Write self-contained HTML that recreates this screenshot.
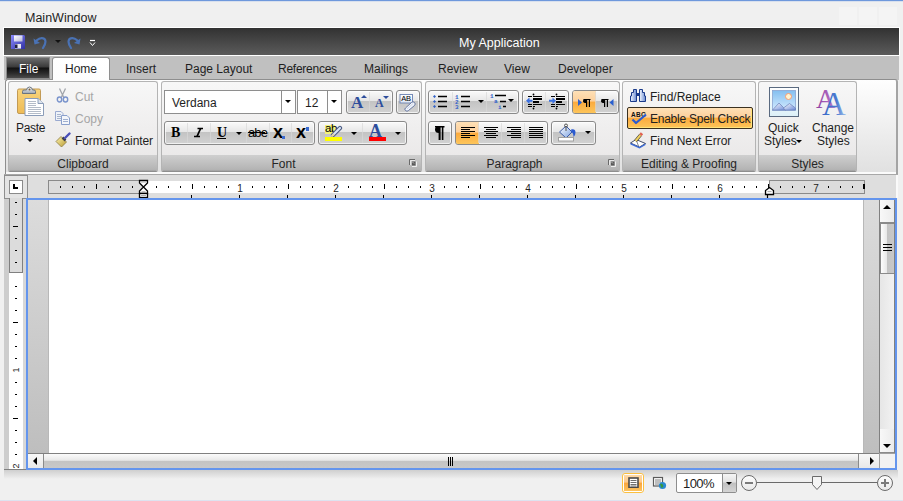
<!DOCTYPE html>
<html><head><meta charset="utf-8">
<style>
*{box-sizing:border-box;margin:0;padding:0}
html,body{width:903px;height:501px;overflow:hidden;background:#f0f0f0;font-family:"Liberation Sans",sans-serif;font-size:12px;color:#1e1e1e;position:relative}
.a{position:absolute}
.t{position:absolute;white-space:nowrap;line-height:14px}
/* top */
#topline{left:0;top:0;width:903px;height:2px;background:linear-gradient(#6e98dc 50%,#d8e0ee 50%)}
.capbtn{position:absolute;top:7px;height:18px;width:18px;background:#f4f4f4}
#qat{left:3px;top:27px;width:897px;height:29px;border:1px solid #fff;background:linear-gradient(#323232,#5b5b5b)}
#tabstrip{left:4px;top:56px;width:895px;height:24px;background:#c0c0c0}
#ribbon{left:5px;top:79px;width:893px;height:96px;border:1px solid #8e8e8e;border-right:2px solid #a4a4a4;border-radius:3px 3px 0 0;background:linear-gradient(#fefefe,#e0e0e0)}
.grp{position:absolute;top:81px;height:91px;border:1px solid #b4b4b4;border-bottom-color:#8e8e8e;border-radius:3px 3px 2px 2px;background:linear-gradient(#f7f7f7,#e8e6e6);overflow:hidden}
.grp .lbl{position:absolute;left:0;right:0;bottom:0;height:16px;background:linear-gradient(#cfcfcf,#b4b4b4 90%,#a0a0a0);text-align:center;line-height:19px;color:#262626}
.btng{position:absolute;border:1px solid #8a8a8a;border-radius:3px;background:linear-gradient(#fafafa 0%,#e6e6e6 45%,#c3c3c3 46%,#d2d2d2 100%);box-shadow:inset 0 0 0 1px rgba(255,255,255,.7)}
.sep{position:absolute;top:1px;bottom:1px;width:1px;background:rgba(160,160,160,.45);border-right:1px solid rgba(255,255,255,.4)}
.combo{position:absolute;border:1px solid #8e8e8e;background:#fff}
.dd{position:absolute;width:0;height:0;border-left:3px solid transparent;border-right:3px solid transparent;border-top:3px solid #000}
.orange{background:linear-gradient(#fee0b6 0%,#fdd09c 46%,#fbaa3e 50%,#fdc55a 100%)!important;border-color:#c29a48!important}
.rnum{position:absolute;top:182px;width:8px;text-align:center;font-size:10px;line-height:14px;color:#222}
.vnum{position:absolute;left:12px;width:8px;text-align:center;font-size:9px;line-height:12px;color:#222;transform:rotate(-90deg)}
</style></head><body>
<div class="a" id="topline"></div>
<div class="t" style="left:25px;top:11px;color:#1e1e1e;font-size:12.5px">MainWindow</div>
<div class="capbtn" style="left:839px"></div>
<div class="capbtn" style="left:859px"></div>
<div class="capbtn" style="left:879px"></div>

<div class="a" id="qat"></div>

<svg class="a" style="left:10px;top:34px" width="16" height="16" viewBox="0 0 16 16">
 <defs><linearGradient id="flp" x1="0" y1="0" x2="1" y2="1"><stop offset="0" stop-color="#8a8aff"/><stop offset="1" stop-color="#3030a0"/></linearGradient>
 <linearGradient id="lbl2" x1="0" y1="0" x2="1" y2="1"><stop offset="0" stop-color="#fff"/><stop offset="1" stop-color="#b8b8d8"/></linearGradient></defs>
 <path d="M1 1 H14 L15 2 V15 H1 Z" fill="url(#flp)"/>
 <rect x="4" y="1.5" width="8.5" height="6" fill="url(#lbl2)"/>
 <rect x="5" y="10" width="6" height="4.5" fill="#e8e8f0"/><rect x="5" y="10.5" width="2.5" height="3.5" fill="#202040"/>
</svg>
<svg class="a" style="left:33px;top:35px" width="14" height="14" viewBox="0 0 14 14">
 <path d="M3.5 5.5 Q8 1.5 11.5 4 Q14 7 10 13" stroke="#4a72b4" stroke-width="2.2" fill="none" stroke-linecap="round"/>
 <path d="M0.5 3.5 L1.5 9.5 L7 8 Z" fill="#4a72b4"/>
</svg>
<div class="a" style="left:55px;top:40px;width:0;height:0;border-left:3px solid transparent;border-right:3px solid transparent;border-top:3px solid #111"></div>
<svg class="a" style="left:67px;top:35px" width="14" height="14" viewBox="0 0 14 14">
 <path d="M10.5 5.5 Q6 1.5 2.5 4 Q0 7 4 13" stroke="#4a72b4" stroke-width="2.2" fill="none" stroke-linecap="round"/>
 <path d="M13.5 3.5 L12.5 9.5 L7 8 Z" fill="#4a72b4"/>
</svg>
<svg class="a" style="left:89px;top:39px" width="7" height="8" viewBox="0 0 7 8"><path d="M1 1.5 H6" stroke="#fff" stroke-width="1.2"/><path d="M1 3.5 L3.5 6.5 L6 3.5" stroke="#fff" stroke-width="1" fill="none"/></svg>
<div class="t" style="left:459px;top:36px;color:#fff;font-size:12.5px">My Application</div>

<div class="a" id="tabstrip"></div>
<!-- File button -->
<div class="a" style="left:6px;top:57px;width:44px;height:22px;border:1px solid #8a8a8a;background:linear-gradient(#6c6c6c,#3a3a3a 45%,#111 50%,#2a2a2a 75%,#4a4a4a)"></div>
<div class="t" style="left:19px;top:62px;color:#fff">File</div>
<!-- Home tab -->
<div class="a" style="left:52px;top:57px;width:58px;height:24px;border:1px solid #8e8e8e;border-bottom:none;border-radius:3px 3px 0 0;background:linear-gradient(#fff,#fdfdfd)"></div>
<div class="t" style="left:65px;top:62px">Home</div>
<div class="t" style="left:126px;top:62px">Insert</div>
<div class="t" style="left:185px;top:62px">Page Layout</div>
<div class="t" style="left:278px;top:62px;letter-spacing:-0.25px">References</div>
<div class="t" style="left:364px;top:62px">Mailings</div>
<div class="t" style="left:438px;top:62px">Review</div>
<div class="t" style="left:504px;top:62px">View</div>
<div class="t" style="left:558px;top:62px">Developer</div>

<div class="a" id="ribbon"></div>
<div class="a" style="left:53px;top:79px;width:56px;height:2px;background:#fdfdfd"></div>

<div class="a" style="left:6px;top:172px;width:890px;height:2px;background:#fbfbfb"></div>
<!-- Clipboard group -->
<div class="grp" style="left:8px;width:150px"><div class="lbl">Clipboard</div></div>
<!-- Font group -->
<div class="grp" style="left:161px;width:261px"><div class="lbl" style="padding-right:16px">Font</div></div>
<!-- Paragraph group -->
<div class="grp" style="left:425px;width:195px"><div class="lbl" style="padding-right:16px">Paragraph</div></div>
<!-- Editing group -->
<div class="grp" style="left:622px;width:134px"><div class="lbl">Editing &amp; Proofing</div></div>
<!-- Styles group -->
<div class="grp" style="left:758px;width:99px"><div class="lbl">Styles</div></div>


<!-- ===== RULER ===== -->
<div class="a" style="left:4px;top:174px;width:894px;height:1px;background:#a8a8a8"></div>
<div class="a" style="left:28px;top:175px;width:868px;height:23px;background:#dedede"></div><div class="a" style="left:896px;top:175px;width:2px;height:23px;background:#fafafa"></div>
<!-- corner -->
<div class="a" style="left:4px;top:175px;width:24px;height:24px;border:1px solid #8e8e8e;background:#e4e4e4"></div>
<div class="a" style="left:9px;top:180px;width:14px;height:14px;border:1px solid #8a8a8a;background:#fff"></div>
<div class="a" style="left:13px;top:184px;width:2px;height:5px;background:#000"></div>
<div class="a" style="left:13px;top:187px;width:5px;height:2px;background:#000"></div>
<!-- horizontal ruler -->
<div class="a" style="left:48px;top:181px;width:816px;height:12px;background:#fff"></div>
<div class="a" style="left:48px;top:180px;width:96px;height:14px;border:1px solid #8a8a8a;border-right:none;background:#dcdcdc"></div>
<div class="a" style="left:769px;top:180px;width:96px;height:14px;border:1px solid #8a8a8a;background:#dcdcdc"></div>
<div class="a" style="left:60px;top:186px;width:1px;height:2px;background:#000"></div>
<div class="a" style="left:72px;top:186px;width:1px;height:2px;background:#000"></div>
<div class="a" style="left:84px;top:186px;width:1px;height:2px;background:#000"></div>
<div class="a" style="left:96px;top:184px;width:1px;height:5px;background:#000"></div>
<div class="a" style="left:108px;top:186px;width:1px;height:2px;background:#000"></div>
<div class="a" style="left:120px;top:186px;width:1px;height:2px;background:#000"></div>
<div class="a" style="left:132px;top:186px;width:1px;height:2px;background:#000"></div>
<div class="a" style="left:156px;top:186px;width:1px;height:2px;background:#000"></div>
<div class="a" style="left:168px;top:186px;width:1px;height:2px;background:#000"></div>
<div class="a" style="left:180px;top:186px;width:1px;height:2px;background:#000"></div>
<div class="a" style="left:192px;top:184px;width:1px;height:5px;background:#000"></div>
<div class="a" style="left:204px;top:186px;width:1px;height:2px;background:#000"></div>
<div class="a" style="left:216px;top:186px;width:1px;height:2px;background:#000"></div>
<div class="a" style="left:228px;top:186px;width:1px;height:2px;background:#000"></div>
<div class="rnum" style="left:236px">1</div>
<div class="a" style="left:252px;top:186px;width:1px;height:2px;background:#000"></div>
<div class="a" style="left:264px;top:186px;width:1px;height:2px;background:#000"></div>
<div class="a" style="left:276px;top:186px;width:1px;height:2px;background:#000"></div>
<div class="a" style="left:288px;top:184px;width:1px;height:5px;background:#000"></div>
<div class="a" style="left:300px;top:186px;width:1px;height:2px;background:#000"></div>
<div class="a" style="left:312px;top:186px;width:1px;height:2px;background:#000"></div>
<div class="a" style="left:324px;top:186px;width:1px;height:2px;background:#000"></div>
<div class="rnum" style="left:332px">2</div>
<div class="a" style="left:348px;top:186px;width:1px;height:2px;background:#000"></div>
<div class="a" style="left:360px;top:186px;width:1px;height:2px;background:#000"></div>
<div class="a" style="left:372px;top:186px;width:1px;height:2px;background:#000"></div>
<div class="a" style="left:384px;top:184px;width:1px;height:5px;background:#000"></div>
<div class="a" style="left:396px;top:186px;width:1px;height:2px;background:#000"></div>
<div class="a" style="left:408px;top:186px;width:1px;height:2px;background:#000"></div>
<div class="a" style="left:420px;top:186px;width:1px;height:2px;background:#000"></div>
<div class="rnum" style="left:428px">3</div>
<div class="a" style="left:444px;top:186px;width:1px;height:2px;background:#000"></div>
<div class="a" style="left:456px;top:186px;width:1px;height:2px;background:#000"></div>
<div class="a" style="left:468px;top:186px;width:1px;height:2px;background:#000"></div>
<div class="a" style="left:480px;top:184px;width:1px;height:5px;background:#000"></div>
<div class="a" style="left:492px;top:186px;width:1px;height:2px;background:#000"></div>
<div class="a" style="left:504px;top:186px;width:1px;height:2px;background:#000"></div>
<div class="a" style="left:516px;top:186px;width:1px;height:2px;background:#000"></div>
<div class="rnum" style="left:524px">4</div>
<div class="a" style="left:540px;top:186px;width:1px;height:2px;background:#000"></div>
<div class="a" style="left:552px;top:186px;width:1px;height:2px;background:#000"></div>
<div class="a" style="left:564px;top:186px;width:1px;height:2px;background:#000"></div>
<div class="a" style="left:576px;top:184px;width:1px;height:5px;background:#000"></div>
<div class="a" style="left:588px;top:186px;width:1px;height:2px;background:#000"></div>
<div class="a" style="left:600px;top:186px;width:1px;height:2px;background:#000"></div>
<div class="a" style="left:612px;top:186px;width:1px;height:2px;background:#000"></div>
<div class="rnum" style="left:620px">5</div>
<div class="a" style="left:636px;top:186px;width:1px;height:2px;background:#000"></div>
<div class="a" style="left:648px;top:186px;width:1px;height:2px;background:#000"></div>
<div class="a" style="left:660px;top:186px;width:1px;height:2px;background:#000"></div>
<div class="a" style="left:672px;top:184px;width:1px;height:5px;background:#000"></div>
<div class="a" style="left:684px;top:186px;width:1px;height:2px;background:#000"></div>
<div class="a" style="left:696px;top:186px;width:1px;height:2px;background:#000"></div>
<div class="a" style="left:708px;top:186px;width:1px;height:2px;background:#000"></div>
<div class="rnum" style="left:716px">6</div>
<div class="a" style="left:732px;top:186px;width:1px;height:2px;background:#000"></div>
<div class="a" style="left:744px;top:186px;width:1px;height:2px;background:#000"></div>
<div class="a" style="left:756px;top:186px;width:1px;height:2px;background:#000"></div>
<div class="a" style="left:780px;top:186px;width:1px;height:2px;background:#000"></div>
<div class="a" style="left:792px;top:186px;width:1px;height:2px;background:#000"></div>
<div class="a" style="left:804px;top:186px;width:1px;height:2px;background:#000"></div>
<div class="rnum" style="left:812px">7</div>
<div class="a" style="left:828px;top:186px;width:1px;height:2px;background:#000"></div>
<div class="a" style="left:840px;top:186px;width:1px;height:2px;background:#000"></div>
<div class="a" style="left:852px;top:186px;width:1px;height:2px;background:#000"></div>
<div class="a" style="left:191px;top:195px;width:1px;height:3px;background:#000"></div>
<div class="a" style="left:239px;top:195px;width:1px;height:3px;background:#000"></div>
<div class="a" style="left:287px;top:195px;width:1px;height:3px;background:#000"></div>
<div class="a" style="left:335px;top:195px;width:1px;height:3px;background:#000"></div>
<div class="a" style="left:383px;top:195px;width:1px;height:3px;background:#000"></div>
<div class="a" style="left:431px;top:195px;width:1px;height:3px;background:#000"></div>
<div class="a" style="left:479px;top:195px;width:1px;height:3px;background:#000"></div>
<div class="a" style="left:527px;top:195px;width:1px;height:3px;background:#000"></div>
<div class="a" style="left:575px;top:195px;width:1px;height:3px;background:#000"></div>
<div class="a" style="left:623px;top:195px;width:1px;height:3px;background:#000"></div>
<div class="a" style="left:671px;top:195px;width:1px;height:3px;background:#000"></div>
<div class="a" style="left:719px;top:195px;width:1px;height:3px;background:#000"></div>
<svg class="a" style="left:138px;top:179px" width="12" height="20" viewBox="0 0 12 20"><path d="M1.5 1.5 H9.5 V4 L5.5 8 L9.5 12 V14.5 H1.5 V12 L5.5 8 L1.5 4 Z" fill="#fff" stroke="#000" stroke-width="1.3"/><path d="M3 3H8M3.5 12.8H7.5" stroke="#b0b0b0" stroke-width="1.2"/><rect x="1.5" y="14.5" width="8" height="4" fill="#fff" stroke="#000" stroke-width="1.3"/><path d="M3 16.5H8" stroke="#b0b0b0"/></svg>
<div class="a" style="left:768px;top:184px;width:1px;height:4px;background:#000"></div>
<svg class="a" style="left:764px;top:186px" width="12" height="13" viewBox="0 0 12 13"><path d="M1.5 8.5 V4.5 L5.5 1.5 L9.5 4.5 V8.5 Z" fill="#fff" stroke="#000" stroke-width="1.3"/><path d="M3.5 5.5H7.5" stroke="#b0b0b0" stroke-width="1.2"/><path d="M3.5 8.5 V12" stroke="#000" stroke-width="1.2"/></svg>
<div class="a" style="left:863px;top:184px;width:2px;height:5px;background:#000"></div>

<!-- ===== DOCUMENT FRAME ===== -->
<div class="a" style="left:4px;top:199px;width:5px;height:270px;background:#cdcdcd"></div>
<div class="a" style="left:9px;top:199px;width:14px;height:270px;background:#fff"></div>
<div class="a" style="left:9px;top:198px;width:14px;height:75px;border:1px solid #808080;border-top:none;background:#dcdcdc"></div>
<div class="a" style="left:23px;top:199px;width:3px;height:270px;background:#d8d8d8"></div>
<div class="a" style="left:4px;top:469px;width:23px;height:1px;background:#808080"></div>
<div class="a" style="left:0;top:0;width:30px;height:469px;overflow:hidden"><div class="a" style="left:15px;top:202px;width:2px;height:1px;background:#000"></div>
<div class="a" style="left:15px;top:214px;width:2px;height:1px;background:#000"></div>
<div class="a" style="left:13px;top:226px;width:5px;height:1px;background:#000"></div>
<div class="a" style="left:15px;top:238px;width:2px;height:1px;background:#000"></div>
<div class="a" style="left:15px;top:250px;width:2px;height:1px;background:#000"></div>
<div class="a" style="left:15px;top:262px;width:2px;height:1px;background:#000"></div>
<div class="a" style="left:15px;top:286px;width:2px;height:1px;background:#000"></div>
<div class="a" style="left:15px;top:298px;width:2px;height:1px;background:#000"></div>
<div class="a" style="left:15px;top:310px;width:2px;height:1px;background:#000"></div>
<div class="a" style="left:13px;top:322px;width:5px;height:1px;background:#000"></div>
<div class="a" style="left:15px;top:334px;width:2px;height:1px;background:#000"></div>
<div class="a" style="left:15px;top:346px;width:2px;height:1px;background:#000"></div>
<div class="a" style="left:15px;top:358px;width:2px;height:1px;background:#000"></div>
<div class="vnum" style="top:364px">1</div>
<div class="a" style="left:15px;top:382px;width:2px;height:1px;background:#000"></div>
<div class="a" style="left:15px;top:394px;width:2px;height:1px;background:#000"></div>
<div class="a" style="left:15px;top:406px;width:2px;height:1px;background:#000"></div>
<div class="a" style="left:13px;top:418px;width:5px;height:1px;background:#000"></div>
<div class="a" style="left:15px;top:430px;width:2px;height:1px;background:#000"></div>
<div class="a" style="left:15px;top:442px;width:2px;height:1px;background:#000"></div>
<div class="a" style="left:15px;top:454px;width:2px;height:1px;background:#000"></div>
<div class="vnum" style="top:460px">2</div></div>

<div class="a" style="left:26px;top:198px;width:871px;height:272px;border:2px solid #6495ed;background:#fff"></div>
<div class="a" style="left:28px;top:200px;width:21px;height:253px;background:linear-gradient(#dcdcdc,#bebebe);border-right:1px solid #b8b8b8"></div>
<div class="a" style="left:863px;top:200px;width:16px;height:253px;background:linear-gradient(#dcdcdc,#bebebe);border-left:1px solid #b8b8b8"></div>
<!-- v scrollbar -->
<div class="a" style="left:879px;top:200px;width:16px;height:253px;background:linear-gradient(90deg,#e6e6e6,#f2f2f2);border-left:1px solid #808080;border-right:1px solid #808080"></div>
<div class="a" style="left:880px;top:200px;width:14px;height:23px;background:linear-gradient(90deg,#f8f8f8,#ececec);border-bottom:1px solid #8a8a8a"></div>
<div class="a" style="left:883px;top:205px;width:0;height:0;border-left:4px solid transparent;border-right:4px solid transparent;border-bottom:4px solid #000"></div>
<div class="a" style="left:880px;top:223px;width:14px;height:51px;border:1px solid #8a8a8a;border-right:none;background:linear-gradient(90deg,#fdfdfd,#e8e8e8 45%,#c4c4c4 50%,#c8c8c8)"></div>
<div class="a" style="left:883px;top:244px;width:9px;height:1px;background:#000"></div>
<div class="a" style="left:883px;top:247px;width:9px;height:1px;background:#000"></div>
<div class="a" style="left:883px;top:250px;width:9px;height:1px;background:#000"></div>
<div class="a" style="left:880px;top:429px;width:14px;height:24px;background:linear-gradient(90deg,#f8f8f8,#ececec);border-bottom:1px solid #8a8a8a"></div>
<div class="a" style="left:883px;top:444px;width:0;height:0;border-left:4px solid transparent;border-right:4px solid transparent;border-top:4px solid #000"></div>
<!-- h scrollbar -->
<div class="a" style="left:28px;top:453px;width:851px;height:15px;background:#f0f0f0;border-top:1px solid #808080"></div>
<div class="a" style="left:28px;top:454px;width:16px;height:14px;background:linear-gradient(#f8f8f8,#e8e8e8);border-right:1px solid #8a8a8a"></div>
<div class="a" style="left:33px;top:457px;width:0;height:0;border-top:4px solid transparent;border-bottom:4px solid transparent;border-right:4px solid #000"></div>
<div class="a" style="left:44px;top:454px;width:815px;height:14px;background:linear-gradient(#fbfbfb,#e8e8e8 45%,#c4c4c4 52%,#c8c8c8)"></div>
<div class="a" style="left:448px;top:457px;width:1px;height:9px;background:#000"></div>
<div class="a" style="left:450px;top:457px;width:1px;height:9px;background:#000"></div>
<div class="a" style="left:452px;top:457px;width:1px;height:9px;background:#000"></div>
<div class="a" style="left:858px;top:454px;width:21px;height:14px;background:linear-gradient(#f8f8f8,#e8e8e8);border-left:1px solid #8a8a8a"></div>
<div class="a" style="left:870px;top:457px;width:0;height:0;border-top:4px solid transparent;border-bottom:4px solid transparent;border-left:4px solid #000"></div>
<div class="a" style="left:879px;top:453px;width:16px;height:15px;background:#f2f2f2;border-left:1px solid #a0a0a0;border-top:1px solid #a0a0a0"></div>

<!-- ===== STATUS BAR ===== -->
<div class="a" style="left:4px;top:470px;width:894px;height:9px;background:linear-gradient(#cfcfcf,#f0f0f0)"></div>
<div class="a" style="left:0;top:500px;width:903px;height:1px;background:#dde3f0"></div>
<div class="a" style="left:622px;top:473px;width:22px;height:20px;border:1px solid #fcc040;border-radius:3px;background:#fff;padding:1px"><div style="width:18px;height:16px;background:linear-gradient(#fed9a6,#fdc98a 45%,#fba53c 50%,#fcc35e)"></div></div>
<svg class="a" style="left:628px;top:477px" width="11" height="11" viewBox="0 0 11 11"><rect x="1" y="1" width="9" height="9.5" fill="#fff" stroke="#4a4a4a" stroke-width="1.6"/><path d="M2.5 3.5H8.5M2.5 5.5H8.5M2.5 7.5H8.5M2.5 9H8.5" stroke="#606060" stroke-width="0.9"/></svg>
<svg class="a" style="left:652px;top:476px" width="15" height="14" viewBox="0 0 15 14"><rect x="1.5" y="1.5" width="9" height="8.5" fill="#fff" stroke="#5a5a5a" stroke-width="1.2"/><path d="M3 4H9M3 6H9M3 8H7" stroke="#707070" stroke-width="0.9"/><circle cx="10.5" cy="9.5" r="3.6" fill="#2a8ad0"/><path d="M8 8 Q10 7 11 9 Q12 11 9.5 12" fill="#3a9a3a"/></svg>
<div class="combo" style="left:676px;top:473px;width:61px;height:20px;border-radius:2px"></div>
<div class="t" style="left:683px;top:477px;font-size:13px;letter-spacing:-0.6px">100%</div>
<div class="a" style="left:722px;top:474px;width:14px;height:18px;border-left:1px solid #8e8e8e;background:linear-gradient(#f6f6f6,#e2e2e2 45%,#c0c0c0 50%,#d4d4d4)"></div>
<div class="dd" style="left:726px;top:482px"></div>
<div class="a" style="left:741px;top:475px;width:16px;height:16px;border:1px solid #6a6a6a;border-radius:50%;background:linear-gradient(#fdfdfd,#e8e8e8)"></div>
<div class="a" style="left:745px;top:482px;width:8px;height:2px;background:#7a7a7a"></div>
<div class="a" style="left:757px;top:482px;width:120px;height:1px;background:#6a6a6a"></div>
<div class="a" style="left:877px;top:475px;width:16px;height:16px;border:1px solid #6a6a6a;border-radius:50%;background:linear-gradient(#fdfdfd,#e8e8e8)"></div>
<div class="a" style="left:881px;top:482px;width:8px;height:2px;background:#7a7a7a"></div>
<div class="a" style="left:884px;top:479px;width:2px;height:8px;background:#7a7a7a"></div>
<svg class="a" style="left:811px;top:475px" width="12" height="16" viewBox="0 0 12 16"><path d="M1.5 1.5 H10.5 V9.5 L6 14.5 L1.5 9.5 Z" fill="#f4f4f4" stroke="#6a6a6a"/></svg>

<!-- ===== CLIPBOARD CONTENT ===== -->
<svg class="a" style="left:14px;top:84px" width="32" height="34" viewBox="0 0 32 34">
 <defs><linearGradient id="brd" x1="0" y1="0" x2="0" y2="1"><stop offset="0" stop-color="#f8d47c"/><stop offset="1" stop-color="#eebb55"/></linearGradient>
 <linearGradient id="clp" x1="0" y1="0" x2="0" y2="1"><stop offset="0" stop-color="#fff"/><stop offset="1" stop-color="#9aa4b0"/></linearGradient></defs>
 <rect x="3.5" y="5" width="23" height="24.5" rx="1.5" fill="url(#brd)" stroke="#c29a55"/>
 <path d="M8.5 9.5 L8.5 7.5 Q8.5 6 10 6 L12.5 6 Q13 3 15.5 3 Q18 3 18.5 6 L20 6 Q21.5 6 21.5 7.5 L21.5 9.5 Z" fill="url(#clp)" stroke="#6a7480"/>
 <circle cx="15.5" cy="5.5" r="1" fill="#7a6040"/>
 <path d="M11 14.5 H24 L29.5 19.5 V31.5 H11 Z" fill="#fff" stroke="#8a9cb8"/>
 <path d="M24 14.5 V19.5 H29.5" fill="#dde4ee" stroke="#8a9cb8"/>
 <g stroke="#b4bcc8" stroke-width="1"><path d="M14 17.5H22M14 19.5H22M14 21.5H22M14 23.5H27M14 25.5H27M14 27.5H27M14 29.5H27"/></g>
</svg>
<div class="t" style="left:16px;top:121px;letter-spacing:-0.3px">Paste</div>
<div class="dd" style="left:27px;top:139px;border-left-width:3px;border-right-width:3px;border-top-width:3px"></div>

<svg class="a" style="left:56px;top:88px" width="14" height="16" viewBox="0 0 14 16">
 <path d="M3.5 0.5 L8 10 M9.5 0.5 L5 10" stroke="#a0a4aa" stroke-width="1.3" fill="none"/>
 <ellipse cx="3.5" cy="11.5" rx="2.2" ry="2.5" fill="none" stroke="#7a94cc" stroke-width="1.4"/>
 <ellipse cx="9.5" cy="11.5" rx="2.2" ry="2.5" fill="none" stroke="#7a94cc" stroke-width="1.4"/>
</svg>
<div class="t" style="left:75px;top:90px;color:#a6a6a6">Cut</div>
<svg class="a" style="left:55px;top:110px" width="16" height="15" viewBox="0 0 16 15">
 <path d="M0.5 1.5 H6 L8 3.5 V10.5 H0.5 Z" fill="#eef2f8" stroke="#9aaad0"/>
 <path d="M2 4.5H6M2 6.5H6M2 8.5H6" stroke="#a8b4cc"/>
 <path d="M6.5 5.5 H12 L14.5 8 V14.5 H6.5 Z" fill="#f4f6fa" stroke="#8aa0cc"/>
 <path d="M8 9.5H13M8 11.5H13" stroke="#a0b0d0"/>
</svg>
<div class="t" style="left:75px;top:112px;color:#a6a6a6">Copy</div>
<svg class="a" style="left:55px;top:132px" width="17" height="16" viewBox="0 0 17 16">
 <defs><linearGradient id="brs" x1="0" y1="0" x2="1" y2="1"><stop offset="0" stop-color="#fff4b0"/><stop offset="1" stop-color="#b89a30"/></linearGradient></defs>
 <path d="M1 9.5 L6 4.5 L11.5 10 L6.5 15 Z" fill="url(#brs)" stroke="#8a7a40" stroke-width="0.8"/>
 <path d="M7.5 5.5 L10.5 8.5" stroke="#404048" stroke-width="2.5"/>
 <path d="M10 6 L14.5 1.5" stroke="#4a50b8" stroke-width="2.4" stroke-linecap="round"/>
</svg>
<div class="t" style="left:75px;top:134px;letter-spacing:-0.1px">Format Painter</div>

<!-- ===== FONT CONTENT ===== -->
<div class="combo" style="left:164px;top:90px;width:132px;height:24px"></div>
<div class="a" style="left:281px;top:91px;width:1px;height:22px;background:#8e8e8e"></div>
<div class="dd" style="left:285px;top:100px"></div>
<div class="t" style="left:172px;top:96px">Verdana</div>
<div class="combo" style="left:297px;top:90px;width:45px;height:24px"></div>
<div class="a" style="left:327px;top:91px;width:1px;height:22px;background:#8e8e8e"></div>
<div class="dd" style="left:331px;top:100px"></div>
<div class="t" style="left:305px;top:96px">12</div>

<div class="btng" style="left:346px;top:90px;width:47px;height:24px"><div class="sep" style="left:22px"></div></div>
<div class="t" style="left:351px;top:96px;font-family:'Liberation Serif';font-weight:bold;font-size:17px;color:#2d4d9c">A</div>
<div class="a" style="left:361px;top:95px;width:0;height:0;border-left:3px solid transparent;border-right:3px solid transparent;border-bottom:3px solid #2d4d9c"></div>
<div class="t" style="left:375px;top:96px;font-family:'Liberation Serif';font-weight:bold;font-size:12px;color:#2d4d9c">A</div>
<div class="a" style="left:383px;top:96px;width:0;height:0;border-left:3px solid transparent;border-right:3px solid transparent;border-top:3px solid #2d4d9c"></div>

<div class="btng" style="left:396px;top:90px;width:24px;height:24px"></div>
<svg class="a" style="left:398px;top:92px" width="20" height="20" viewBox="0 0 20 20">
 <defs><linearGradient id="tb" x1="0" y1="0" x2="0" y2="1"><stop offset="0" stop-color="#fff"/><stop offset="1" stop-color="#dce6f4"/></linearGradient></defs>
 <rect x="2" y="2.5" width="12.5" height="8.5" fill="url(#tb)" stroke="#6a80b0" stroke-width="0.9"/>
 <text x="3.3" y="9.3" font-family="Liberation Sans" font-size="7.5" fill="#000" letter-spacing="-0.3">AB</text>
 <path d="M7.5 16 L13.5 10.5 Q15 9 16.5 10.5 Q18 12 16.5 13.5 L10.5 18.5 Q9 20 7.5 18.5 Q6 17 7.5 16 Z" fill="#eef2fa" stroke="#5a6c98" stroke-width="0.9"/>
 <path d="M9 17 L15 11.5" stroke="#c4cee0" stroke-width="0.8"/>
</svg>

<div class="btng" style="left:164px;top:121px;width:151px;height:24px">
 <div class="sep" style="left:22px"></div><div class="sep" style="left:45px"></div><div class="sep" style="left:81px"></div><div class="sep" style="left:104px"></div><div class="sep" style="left:126px"></div>
</div>
<div class="t" style="left:171px;top:126px;font-family:'Liberation Serif';font-weight:bold;font-size:14px;color:#000">B</div>
<svg class="a" style="left:192px;top:126px" width="14" height="12" viewBox="0 0 14 12"><path d="M5.5 2.5 H11 M2 10.5 H8" stroke="#000" stroke-width="1.3"/><path d="M8.6 2.5 L5 10.5" stroke="#000" stroke-width="1.8"/></svg>
<div class="t" style="left:217px;top:126px;font-family:'Liberation Serif';font-weight:bold;font-size:14px;color:#000">U</div>
<div class="a" style="left:217px;top:138px;width:9px;height:1px;background:#000"></div>
<div class="dd" style="left:236px;top:132px"></div>
<div class="t" style="left:248px;top:126px;font-size:13px;color:#000;letter-spacing:-0.9px">abe</div>
<div class="a" style="left:248px;top:132px;width:17px;height:1px;background:#000"></div>
<div class="t" style="left:273px;top:125px;font-weight:bold;font-size:18px;color:#000">x</div>
<div class="a" style="left:282px;top:136px;width:3px;height:3px;background:#3a6ad0"></div>
<div class="t" style="left:296px;top:125px;font-weight:bold;font-size:18px;color:#000">x</div>
<div class="a" style="left:306px;top:127px;width:3px;height:4px;background:#3a6ad0"></div>

<div class="btng" style="left:318px;top:121px;width:89px;height:24px"><div class="sep" style="left:43px"></div></div>
<div class="a" style="left:325px;top:125px;width:10px;height:9px;background:#f2f27a"></div>
<div class="t" style="left:325px;top:121px;font-size:11.5px;color:#000;letter-spacing:-0.5px">ab</div>
<svg class="a" style="left:330px;top:125px" width="13" height="12" viewBox="0 0 13 12"><path d="M3 10 L10 3" stroke="#4a5a80" stroke-width="4.2" stroke-linecap="round"/><path d="M3 10 L10 3" stroke="#d8e4f8" stroke-width="2.2" stroke-linecap="round"/><path d="M1.5 11.5 L4 9" stroke="#e0d0a0" stroke-width="2"/></svg>
<div class="a" style="left:325px;top:137px;width:17px;height:4px;background:#ffff00"></div>
<div class="dd" style="left:351px;top:132px"></div>
<div class="t" style="left:369px;top:124px;font-family:'Liberation Serif';font-weight:bold;font-size:18px;color:#2d4d9c">A</div>
<div class="a" style="left:369px;top:137px;width:17px;height:4px;background:#ff0000"></div>
<div class="dd" style="left:395px;top:132px"></div>
<svg class="a" style="left:408px;top:158px" width="10" height="10" viewBox="0 0 10 10"><path d="M1.5 7 V1.5 H7" stroke="#6a6a6a" fill="none"/><path d="M2.5 7 V2.5 H7" stroke="#e8e8e8" fill="none"/><rect x="4" y="3.5" width="3.5" height="4" fill="#5a5a5a"/><path d="M8.5 3.5 V8.5 H4" stroke="#f0f0f0" fill="none"/><path d="M4.5 4 L6 5.5" stroke="#d0d0d0" stroke-width="0.8"/></svg>

<!-- ===== PARAGRAPH CONTENT ===== -->
<div class="btng" style="left:428px;top:90px;width:91px;height:24px"><div class="sep" style="left:23px"></div><div class="sep" style="left:57px"></div></div>
<svg class="a" style="left:429px;top:91px" width="90" height="22" viewBox="0 0 90 22">
 <g fill="#3060c8"><path d="M5.5 4 L7 5.5 L5.5 7 L4 5.5Z"/><path d="M5.5 9 L7 10.5 L5.5 12 L4 10.5Z"/><path d="M5.5 14 L7 15.5 L5.5 17 L4 15.5Z"/></g>
 <g stroke="#000" stroke-width="1.5"><path d="M9 5.5H18M9 10.5H18M9 15.5H18"/></g>
 <g fill="#3060c8" font-family="Liberation Mono" font-size="6" font-weight="bold"><text x="26" y="8">1</text><text x="26" y="13">2</text><text x="26" y="18">3</text></g>
 <g stroke="#000" stroke-width="1.5"><path d="M32 5.5H41M32 10.5H41M32 15.5H41"/></g>
 <path d="M49 9 H55 L52 12Z" fill="#000"/>
 <g fill="#3060c8" font-family="Liberation Mono" font-size="6" font-weight="bold"><text x="61" y="7">1</text><text x="65" y="12">a</text><text x="69" y="18">i</text></g>
 <g stroke="#000" stroke-width="1.5"><path d="M66 4.5H77M71 10.5H77M74 15.5H77"/></g>
 <path d="M79 8 H85 L82 11Z" fill="#000"/>
</svg>
<div class="btng" style="left:522px;top:90px;width:47px;height:24px"><div class="sep" style="left:22px"></div></div>
<svg class="a" style="left:523px;top:91px" width="46" height="22" viewBox="0 0 46 22"><g transform="translate(0 0)"><circle cx="10.5" cy="3.5" r="0.9" fill="#000"/><circle cx="10.5" cy="17.5" r="0.9" fill="#000"/><path d="M5 5.5H9M5 13.5H9M5 15.5H9M10 5.5H19M10 13.5H19M10 15.5H12" stroke="#000" stroke-width="1.1"/><path d="M10 8H19M10 11H16" stroke="#000" stroke-width="2"/><path d="M9.5 8.8H6.5V6.5L3 9.8L6.5 13V10.8H9.5Z" fill="#3a70e0"/></g><g transform="translate(23 0)"><circle cx="10.5" cy="3.5" r="0.9" fill="#000"/><circle cx="10.5" cy="17.5" r="0.9" fill="#000"/><path d="M5 5.5H9M5 13.5H9M5 15.5H9M10 5.5H19M10 13.5H19M10 15.5H12" stroke="#000" stroke-width="1.1"/><path d="M10 8H19M10 11H16" stroke="#000" stroke-width="2"/><path d="M3 8.8H6.5V6.5L10 9.8L6.5 13V10.8H3Z" fill="#3a70e0"/></g></svg>
<div class="btng" style="left:572px;top:90px;width:47px;height:24px"><div class="a orange" style="left:0;top:0;width:23px;height:22px;border-radius:2px 0 0 2px"></div><div class="sep" style="left:22px"></div></div>
<svg class="a" style="left:573px;top:91px" width="46" height="22" viewBox="0 0 46 22">
 <path d="M5 8 L9 11.5 L5 15Z" fill="#2a60d0"/>
 <path d="M10.5 8 H17.5 V9 H10.5Z M13 8 H14.2 V16 H13Z M15.8 8 H17 V16 H15.8Z" fill="#000"/><path d="M13 8 Q10 8 10 10 Q10 12 13 12Z" fill="#000"/>
 <path d="M28.5 8 H35.5 V9 H28.5Z M31 8 H32.2 V16 H31Z M33.8 8 H35 V16 H33.8Z" fill="#000"/><path d="M31 8 Q28 8 28 10 Q28 12 31 12Z" fill="#000"/>
 <path d="M40.5 8 L36.5 11.5 L40.5 15Z" fill="#2a60d0"/>
</svg>

<div class="btng" style="left:428px;top:121px;width:24px;height:24px"></div>
<svg class="a" style="left:434px;top:125px" width="12" height="16" viewBox="0 0 12 16"><path d="M1 1 H10.5 V2.5 H1Z M4.6 1 H6.6 V15 H4.6Z M7.8 1 H9.4 V15 H7.8Z" fill="#000"/><path d="M5 1 Q1 1 1 4.5 Q1 8 5 8Z" fill="#000"/></svg>
<div class="btng" style="left:455px;top:121px;width:93px;height:24px"><div class="a orange" style="left:0;top:0;width:23px;height:22px;border-radius:2px 0 0 2px"></div><div class="sep" style="left:22px"></div><div class="sep" style="left:45px"></div><div class="sep" style="left:68px"></div></div>
<svg class="a" style="left:456px;top:122px" width="92" height="22" viewBox="0 0 92 22">
 <g stroke="#000" stroke-width="1.2">
  <path d="M5 5.5H19M5 7.5H14M5 9.5H19M5 11.5H14M5 13.5H19M5 15.5H14"/>
  <path d="M28 5.5H42M30 7.5H40M28 9.5H42M30 11.5H40M28 13.5H42M30 15.5H40"/>
  <path d="M51 5.5H65M55 7.5H65M51 9.5H65M55 11.5H65M51 13.5H65M55 15.5H65"/>
  <path d="M73 5.5H87M73 7.5H87M73 9.5H87M73 11.5H87M73 13.5H87M73 15.5H87"/>
 </g>
</svg>
<div class="btng" style="left:551px;top:121px;width:45px;height:24px"></div>
<svg class="a" style="left:556px;top:123px" width="22" height="20" viewBox="0 0 22 20">
 <defs><linearGradient id="bkt" x1="0" y1="0" x2="1" y2="1"><stop offset="0" stop-color="#fff"/><stop offset="1" stop-color="#7aa0e0"/></linearGradient></defs>
 <path d="M3.5 9 L10 3 L16 9 L10 15 Z" fill="url(#bkt)" stroke="#3a5aa8"/>
 <path d="M10 3 V8" stroke="#555" stroke-width="1"/><circle cx="10" cy="2.5" r="1.5" fill="none" stroke="#555"/>
 <path d="M15 6.5 Q19.5 5.5 19.5 9.5 Q19.5 12.5 17.5 14 Q17.5 10 15.5 9 Z" fill="#2a5ad0"/>
 <rect x="2.5" y="14.5" width="15" height="3.5" fill="#fff" stroke="#a0a0a0"/>
</svg>
<div class="dd" style="left:585px;top:131px"></div>
<svg class="a" style="left:607px;top:158px" width="10" height="10" viewBox="0 0 10 10"><path d="M1.5 7 V1.5 H7" stroke="#6a6a6a" fill="none"/><path d="M2.5 7 V2.5 H7" stroke="#e8e8e8" fill="none"/><rect x="4" y="3.5" width="3.5" height="4" fill="#5a5a5a"/><path d="M8.5 3.5 V8.5 H4" stroke="#f0f0f0" fill="none"/><path d="M4.5 4 L6 5.5" stroke="#d0d0d0" stroke-width="0.8"/></svg>

<!-- ===== EDITING CONTENT ===== -->
<svg class="a" style="left:629px;top:88px" width="18" height="15" viewBox="0 0 18 15">
 <defs><linearGradient id="bino" x1="0" y1="0" x2="1" y2="0"><stop offset="0" stop-color="#f4f8ff"/><stop offset="1" stop-color="#6a8ad0"/></linearGradient></defs>
 <g fill="url(#bino)" stroke="#1a3a8a" stroke-width="1">
  <path d="M4.5 1.5 H7.5 V13.5 H1.5 V8 H2.5 V4.5 H4.5 Z"/>
  <path d="M10.5 1.5 H13.5 V4.5 H15.5 V8 H16.5 V13.5 H10.5 Z"/>
 </g>
 <rect x="7.5" y="5" width="3" height="3" fill="#1a3a8a"/>
</svg>
<div class="t" style="left:650px;top:90px">Find/Replace</div>
<div class="a orange" style="left:627px;top:107px;width:126px;height:22px;border:1px solid #3a3020!important;border-radius:2px;box-shadow:inset -1px -1px 0 #ffe27a"></div>
<svg class="a" style="left:629px;top:109px" width="20" height="16" viewBox="0 0 20 16">
 <text x="2" y="7.5" font-family="Liberation Sans" font-size="6.5" font-weight="bold" fill="#111" letter-spacing="0.3">ABC</text>
 <path d="M3.5 10.5 L7 14 L17 5.5" stroke="#2a5ad0" stroke-width="2.2" fill="none" stroke-linejoin="round"/>
</svg>
<div class="t" style="left:650px;top:112px;color:#222;letter-spacing:-0.25px">Enable Spell Check</div>
<svg class="a" style="left:629px;top:131px" width="18" height="18" viewBox="0 0 18 18">
 <path d="M1.5 12 L7 8.5 L16.5 12.5 L10.5 16 Z" fill="#fff" stroke="#303a58" stroke-width="0.9"/>
 <path d="M1.5 12 V13.5 L10.5 17.5 L16.5 14 V12.5 L10.5 16 Z" fill="#3a6ad8"/>
 <path d="M7 8.5 L9.5 15" stroke="#606878" stroke-width="0.8"/>
 <path d="M6.5 10 L11.5 4" stroke="#303030" stroke-width="3.2"/><path d="M6.5 10 L11.5 4" stroke="#f0d060" stroke-width="2"/>
 <path d="M11.5 4 L13 2.2" stroke="#e06050" stroke-width="3"/>
</svg>
<div class="t" style="left:650px;top:134px">Find Next Error</div>

<!-- ===== STYLES CONTENT ===== -->
<svg class="a" style="left:768px;top:87px" width="32" height="31" viewBox="0 0 32 31">
 <defs><linearGradient id="sky" x1="0" y1="0" x2="0" y2="1"><stop offset="0" stop-color="#84bff0"/><stop offset="1" stop-color="#d4ebff"/></linearGradient>
 <linearGradient id="frm" x1="0" y1="0" x2="0" y2="1"><stop offset="0" stop-color="#fff"/><stop offset="1" stop-color="#dcf0f8"/></linearGradient>
 <linearGradient id="mtn" x1="0" y1="0" x2="1" y2="1"><stop offset="0" stop-color="#fff"/><stop offset="1" stop-color="#6a8ad8"/></linearGradient></defs>
 <rect x="1.5" y="0.5" width="29" height="29" fill="url(#frm)" stroke="#5a6a80"/>
 <rect x="4.5" y="3.5" width="23" height="20" fill="url(#sky)" stroke="#8aa4d0" stroke-width="0.8"/>
 <circle cx="20.5" cy="9.5" r="3" fill="#fff4d0" stroke="#f89a70" stroke-width="1"/>
 <path d="M4.5 23 L11 16 L18 23Z" fill="url(#mtn)" stroke="#6a80b8" stroke-width="0.7"/>
 <path d="M15.5 21 L21.5 16.5 L27.5 21 V23 H17Z" fill="url(#mtn)" stroke="#6a80b8" stroke-width="0.7"/>
</svg>
<div class="t" style="left:768px;top:121px">Quick</div>
<div class="t" style="left:764px;top:134px">Styles</div>
<div class="dd" style="left:796px;top:140px"></div>
<svg class="a" style="left:810px;top:84px" width="40" height="34" viewBox="0 0 40 34">
 <defs><linearGradient id="ga" x1="0" y1="0" x2="1" y2="0"><stop offset="0" stop-color="#3a6ac8"/><stop offset="0.6" stop-color="#4a7ad0"/><stop offset="1" stop-color="#a0c0ec"/></linearGradient>
 <linearGradient id="gp" x1="0" y1="0" x2="1" y2="0"><stop offset="0" stop-color="#8a3aa0"/><stop offset="1" stop-color="#c080d0"/></linearGradient></defs>
 <text x="6" y="23.5" font-family="Liberation Serif" font-size="27" fill="url(#gp)">A</text>
 <text x="12" y="31" font-family="Liberation Serif" font-size="33" fill="url(#ga)">A</text>
</svg>
<div class="t" style="left:812px;top:121px">Change</div>
<div class="t" style="left:817px;top:134px">Styles</div>
</body></html>
